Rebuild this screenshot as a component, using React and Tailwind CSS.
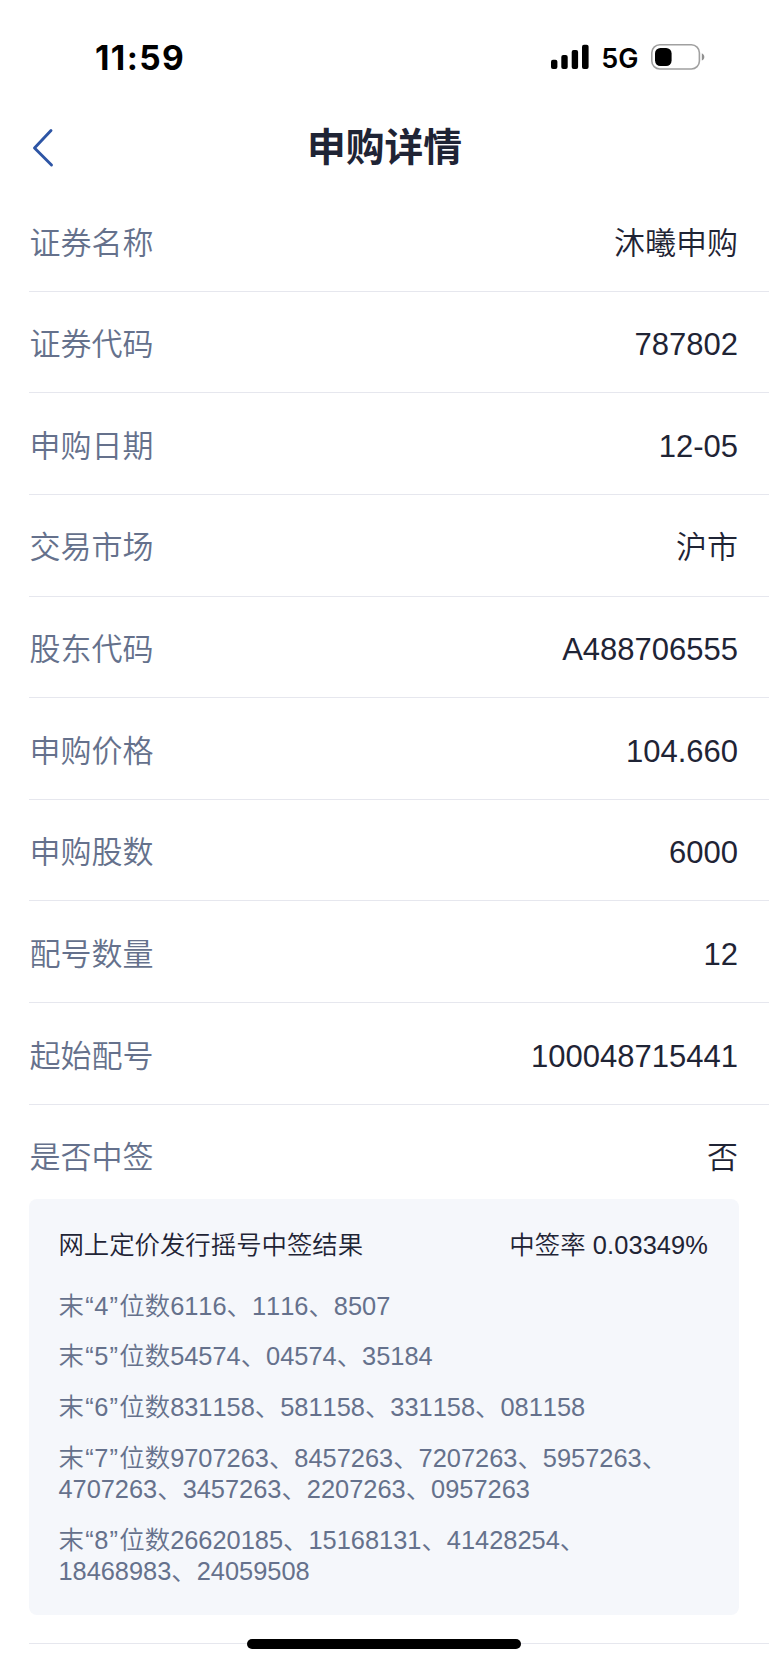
import React from "react";

const details = [
	{ label: "证券名称", value: "沐曦申购" },
	{ label: "证券代码", value: "787802" },
	{ label: "申购日期", value: "12-05" },
	{ label: "交易市场", value: "沪市" },
	{ label: "股东代码", value: "A488706555" },
	{ label: "申购价格", value: "104.660" },
	{ label: "申购股数", value: "6000" },
	{ label: "配号数量", value: "12" },
	{ label: "起始配号", value: "100048715441" },
];

// Winning numbers, grouped by how many trailing digits must match
const winningNumbers = [
	{ digits: 4, lines: ["6116、1116、8507"] },
	{ digits: 5, lines: ["54574、04574、35184"] },
	{ digits: 6, lines: ["831158、581158、331158、081158"] },
	{
		digits: 7,
		lines: ["9707263、8457263、7207263、5957263、", "4707263、3457263、2207263、0957263"],
	},
	{ digits: 8, lines: ["26620185、15168131、41428254、", "18468983、24059508"] },
];

const StatusBar = () => (
	<div className="flex h-[114px] items-center justify-between pr-[64.5px] pl-[95px] font-['Inter',sans-serif] text-black">
		<div className="pt-[3px] text-[33.5px] leading-none font-bold tracking-[1.4px]">11:59</div>
		<div className="flex items-center">
			<svg width="40" height="26" viewBox="0 0 40 26" fill="currentColor">
				<rect x="1" y="15.7" width="6.4" height="9.3" rx="2" />
				<rect x="11.3" y="11.1" width="6.4" height="13.9" rx="2" />
				<rect x="21.7" y="6" width="6.4" height="19" rx="2" />
				<rect x="32" y="0.7" width="6.6" height="24.3" rx="2" />
			</svg>
			<span className="ml-[11px] pt-[3px] text-[27px] leading-none font-semibold">5G</span>
			<svg className="ml-[12px]" width="54" height="26" viewBox="0 0 54 26" fill="none">
				<rect x="0.8" y="0.8" width="47.6" height="24.2" rx="8" stroke="#a0a0a0" strokeWidth="1.6" />
				<rect x="4" y="4" width="16.6" height="18" rx="5.4" fill="#000" />
				<path d="M50.8 9.2c1.6.7 2.5 2 2.5 3.7s-.9 3-2.5 3.7z" fill="#909090" />
			</svg>
		</div>
	</div>
);

const Header = () => (
	<div className="relative flex h-[76px] items-center justify-center pb-[8px]">
		<svg
			className="absolute top-[13px] left-[31px]"
			width="24"
			height="42"
			viewBox="0 0 24 42"
			fill="none"
			stroke="#2d55a5"
			strokeWidth="2.9"
			strokeLinecap="round"
			strokeLinejoin="round"
		>
			<path d="M20 3.5 3.5 21 20.5 38" />
		</svg>
		<h1 className="text-[38.8px] leading-none font-bold text-[#1f2435]">申购详情</h1>
	</div>
);

const DetailRow = ({ label, value }) => (
	<div className="flex h-[101.64px] items-center justify-between border-b-[1.5px] border-[#e6e7ee] pt-[7px] pr-[31px] text-[31px]">
		<span className="text-[#65718c]">{label}</span>
		<span className="text-[#1f2435]">{value}</span>
	</div>
);

const ResultPanel = () => (
	<div className="mr-[30px] h-[416px] rounded-[8px] bg-[#f5f7fb] pt-[31px] pr-[31px] pl-[29px] text-[25.4px] leading-[31px]">
		<div className="flex justify-between text-[#1f2435]">
			<span>网上定价发行摇号中签结果</span>
			<span className="tracking-[0.1px]">中签率 0.03349%</span>
		</div>
		<div className="mt-[29.5px] flex flex-col gap-[19.8px] text-[#65718c]">
			{winningNumbers.map(({ digits, lines }) => (
				<div key={digits}>
					<div className="whitespace-nowrap">
						末<span className="pr-[0.5px] pl-[1.5px]">“</span>
						{digits}
						<span className="pr-[1.5px] pl-[1px]">”</span>位数{lines[0]}
					</div>
					{lines[1] && <div className="whitespace-nowrap">{lines[1]}</div>}
				</div>
			))}
		</div>
	</div>
);

const App = () => {
	return (
		<div
			lang="zh-CN"
			className="relative h-[1665px] w-[769px] overflow-hidden bg-white font-['Liberation_Sans','Noto_Sans_CJK_SC',sans-serif] [font-weight:350] [font-kerning:none]"
		>
			<StatusBar />
			<Header />
			<div className="pl-[29.4px]">
				{details.map((item) => (
					<DetailRow key={item.label} {...item} />
				))}
				<div className="border-b-[1.5px] border-[#e6e7ee] pb-[28px]">
					<div className="flex h-[94.5px] items-center justify-between pt-[12px] pr-[31px] text-[31px]">
						<span className="text-[#65718c]">是否中签</span>
						<span className="text-[#1f2435]">否</span>
					</div>
					<ResultPanel />
				</div>
			</div>
			{/* Home indicator */}
			<div className="absolute bottom-[16px] left-[247px] h-[10px] w-[274px] rounded-full bg-black" />
		</div>
	);
};

export default App;
